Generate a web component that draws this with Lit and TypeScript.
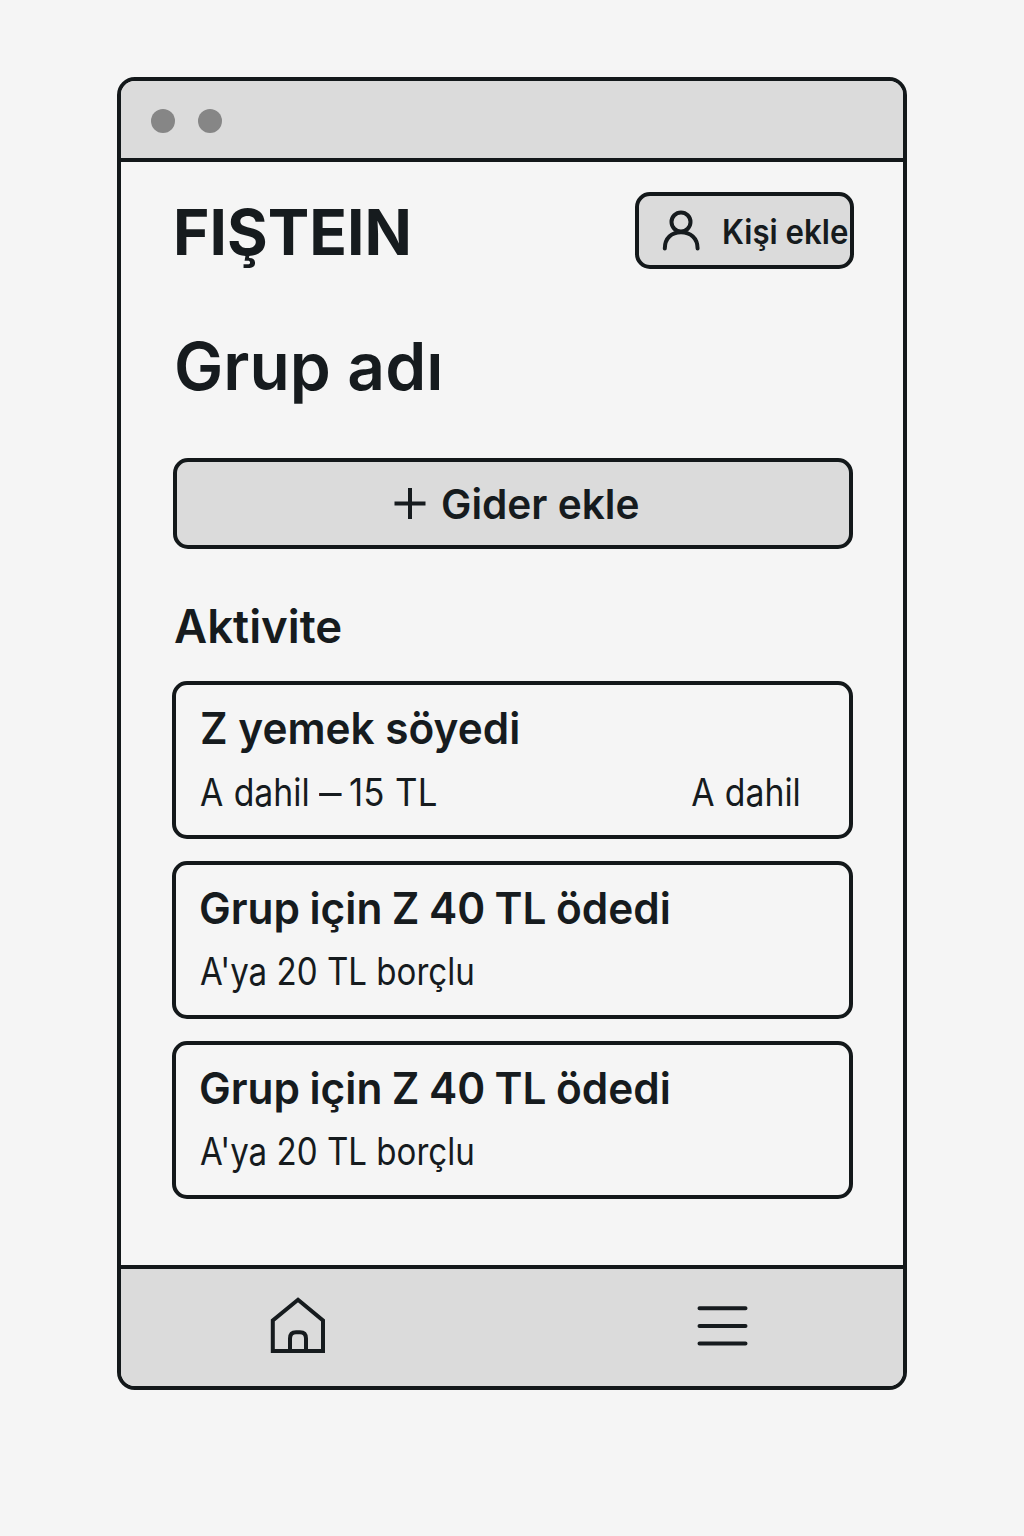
import { LitElement, html, css } from "lit";
import { customElement } from "lit/decorators.js";

interface Activity {
  title: string;
  kind: "meal" | "debt";
  detail: string;
  amount?: string;
  note?: string;
}

const activities: Activity[] = [
  { title: "Z yemek söyedi", kind: "meal", detail: "A dahil", amount: "15 TL", note: "A dahil" },
  { title: "Grup için Z 40 TL ödedi", kind: "debt", detail: "A'ya 20 TL borçlu" },
  { title: "Grup için Z 40 TL ödedi", kind: "debt", detail: "A'ya 20 TL borçlu" },
];

@customElement("app-root")
export class AppRoot extends LitElement {
  static styles = css`
    :host {
      display: flex;
      justify-content: center;
      box-sizing: border-box;
      height: 1536px;
      padding: 77px 0 0;
      background: #f5f5f5;
      color: #161b1e;
      font-family: Inter, "Liberation Sans", sans-serif;
    }
    * { box-sizing: border-box; margin: 0; }
    svg { display: block; fill: none; stroke: currentColor; flex: none; }
    .window {
      display: flex;
      flex-direction: column;
      width: 790px;
      height: 1313px;
      border: 4px solid #13181a;
      border-radius: 18px;
      overflow: hidden;
    }
    .bar {
      display: flex;
      align-items: center;
      gap: 23px;
      height: 81px;
      padding: 2px 30px 0;
      background: #dbdbdb;
      border-bottom: 4px solid #13181a;
    }
    .dot { width: 24px; height: 24px; border-radius: 50%; background: #868686; }
    main { flex: 1; display: flex; flex-direction: column; padding: 30px 50px 0 51px; }
    header { display: flex; justify-content: space-between; height: 77px; }
    .text { display: inline-block; white-space: nowrap; transform-origin: left; }
    .brand { padding-left: 1px; font-size: 63px; line-height: 80px; font-weight: 700; }
    .brand .text { transform: scaleX(0.987); }
    button {
      display: flex;
      align-items: center;
      padding: 0;
      border: 4px solid #13181a;
      border-radius: 15px;
      background: #dbdbdb;
      color: inherit;
      font-family: inherit;
      font-weight: 600;
    }
    .person { width: 219px; height: 77px; margin-right: -1px; padding: 1px 0 0 23px; gap: 22px; font-size: 33.5px; }
    .person .text { padding-top: 2px; transform: scaleX(0.932); }
    .group { margin-top: 57px; padding-left: 2px; font-size: 66px; line-height: 80px; font-weight: 600; }
    .group .text { transform: scaleX(0.997); }
    .expense { gap: 15px; margin: 52px 0 0 1px; height: 91px; padding-left: 217px; font-size: 41px; }
    .expense .text { transform: scaleX(0.99); }
    .section { margin-top: 47px; padding-left: 2px; font-size: 46px; line-height: 60px; font-weight: 600; }
    .section .text { transform: scaleX(0.99); }
    .list { display: flex; flex-direction: column; gap: 22px; margin-top: 25px; }
    .card { height: 158px; padding: 18px 48px 0 24px; border: 4px solid #13181a; border-radius: 15px; }
    .title { font-size: 44px; line-height: 50px; font-weight: 600; }
    .row { display: flex; margin-top: 18px; font-size: 37.5px; line-height: 44px; }
    .meal .title .text { transform: scaleX(0.962); }
    .debt .title .text { transform: scaleX(0.964); word-spacing: -1.3px; margin-left: -1px; }
    .meal .row .text { transform: scaleX(0.9); word-spacing: 1px; }
    .debt .row { margin-top: 17px; }
    .debt .row .text { transform: scaleX(0.883); }
    .dash { margin-left: -3px; transform: scaleX(1.2); transform-origin: left; }
    .meal .row .amount { margin-left: 11px; transform: scaleX(0.93); }
    .meal .row .note { margin-left: auto; transform-origin: right; }
    nav {
      display: flex;
      align-items: flex-start;
      gap: 370px;
      height: 121px;
      padding: 27px 0 0 149px;
      background: #dbdbdb;
      border-top: 4px solid #13181a;
    }
    .menu { margin-top: 9px; }
  `;

  private row(a: Activity) {
    return html`<div class="row">
      <span class="text">${a.detail}</span>
      ${a.amount ? html`<span class="dash">–</span><span class="text amount">${a.amount}</span>` : ""}
      ${a.note ? html`<span class="text note">${a.note}</span>` : ""}
    </div>`;
  }

  render() {
    return html`
      <div class="window">
        <div class="bar"><span class="dot"></span><span class="dot"></span></div>
        <main>
          <header>
            <h1 class="brand"><span class="text">FIŞTEIN</span></h1>
            <button class="person">
              <svg width="38" height="42" viewBox="0 0 38 42" stroke-width="4" stroke-linecap="round">
                <circle cx="19" cy="12" r="9.5" />
                <path d="M2.8 38.5C2.8 28 9.5 22.3 19 22.3S35.6 28 35.6 38.5" />
              </svg>
              <span class="text">Kişi ekle</span>
            </button>
          </header>
          <h2 class="group"><span class="text">Grup adı</span></h2>
          <button class="expense">
            <svg width="32" height="32" viewBox="0 0 32 32" stroke-width="4"><path d="M16 0V31M0.5 15.5H31.5" /></svg>
            <span class="text">Gider ekle</span>
          </button>
          <h3 class="section"><span class="text">Aktivite</span></h3>
          <div class="list">
            ${activities.map(
              (a) => html`<article class="card ${a.kind}">
                <h4 class="title"><span class="text">${a.title}</span></h4>
                ${this.row(a)}
              </article>`
            )}
          </div>
        </main>
        <nav>
          <svg width="56" height="58" viewBox="0 0 56 58" stroke-width="4">
            <path d="M28 3.8L53 24.5V55H2.8V24.5Z" />
            <path d="M20 55V42.5Q20 36.2 26 36.2H30Q36 36.2 36 42.5V55" />
          </svg>
          <svg class="menu" width="52" height="42" viewBox="0 0 52 42" stroke-width="4" stroke-linecap="round">
            <path d="M3.5 3.3H49.5M3.5 21H49.5M3.5 38.5H49.5" />
          </svg>
        </nav>
      </div>
    `;
  }
}
